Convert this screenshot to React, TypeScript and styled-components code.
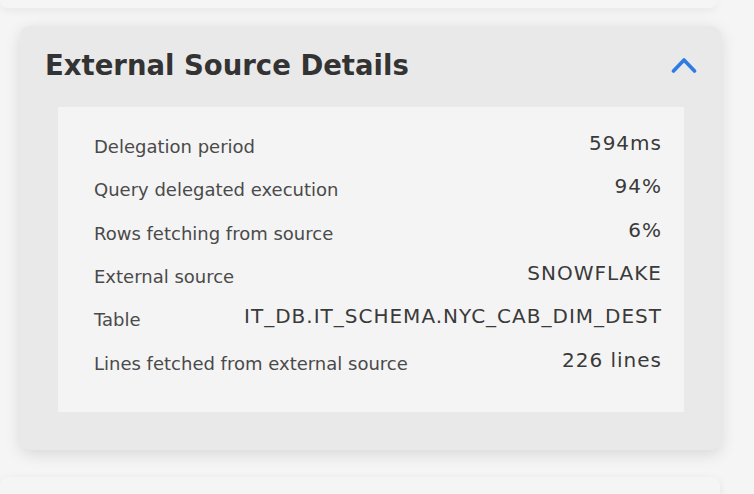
import React, { useState } from 'react'
import styled, { createGlobalStyle } from 'styled-components'

const GlobalStyle = createGlobalStyle`
  html, body {
    margin: 0;
    padding: 0;
    background: #f5f5f5;
    font-family: 'DejaVu Sans', 'Open Sans', sans-serif;
    overflow: hidden;
  }
`

const Page = styled.div`
  display: flex;
  flex-direction: column;
  padding: 0 33px 0 20px;
  height: 494px;
  box-sizing: border-box;
`

const Stub = styled.div<{ $height: number; $top?: boolean }>`
  height: ${(p) => p.$height}px;
  margin-left: -20px;
  margin-right: ${(p) => (p.$top ? 4 : 1)}px;
  flex-shrink: 0;
  background: #f5f5f5;
  border-radius: ${(p) => (p.$top ? '0 0 8px 8px' : '8px 8px 0 0')};
  box-shadow: 0 2px 10px rgba(0, 0, 0, 0.07);
`

const Card = styled.section`
  margin: 18px 0 27px;
  padding: 0 25px 38px;
  background: #e9e9e9;
  border-radius: 10px;
  box-shadow: 0 4px 16px rgba(0, 0, 0, 0.12);
  flex-shrink: 0;
`

const Header = styled.div`
  height: 81px;
  display: flex;
  align-items: center;
  justify-content: space-between;
`

const Title = styled.h2`
  margin: 0 0 2px;
  font-size: 27.5px;
  line-height: 1;
  font-weight: 700;
  color: #333;
`

const Toggle = styled.button`
  border: 0;
  background: none;
  padding: 0;
  width: 26px;
  height: 20px;
  display: flex;
  align-items: center;
  justify-content: center;
  cursor: pointer;
  margin: 0 -1px 3px 0;
`

const Panel = styled.div`
  margin: 0 12px 0 13px;
  padding: 18px 23px 27px 36px;
  background: #f4f4f4;
`

const Row = styled.div`
  height: 43.3px;
  display: flex;
  align-items: center;
  justify-content: space-between;
`

const Label = styled.span`
  font-size: 18px;
  color: #4a4a4a;
`

const Value = styled.span`
  font-size: 20px;
  color: #3a3a3a;
  margin-bottom: 7px;
  letter-spacing: 1px;
  margin-right: -1px;
`

const rows: [string, string][] = [
  ['Delegation period', '594ms'],
  ['Query delegated execution', '94%'],
  ['Rows fetching from source', '6%'],
  ['External source', 'SNOWFLAKE'],
  ['Table', 'IT_DB.IT_SCHEMA.NYC_CAB_DIM_DEST'],
  ['Lines fetched from external source', '226 lines'],
]

function App() {
  const [open, setOpen] = useState(true)

  return (
    <>
      <GlobalStyle />
      <Page>
        <Stub $height={8} $top />
        <Card>
          <Header>
            <Title>External Source Details</Title>
            <Toggle onClick={() => setOpen(!open)}>
              <svg width="26" height="18" viewBox="0 0 26 18">
                <path
                  d={open ? 'M2.5 15 L13 4 L23.5 15' : 'M2.5 4 L13 15 L23.5 4'}
                  fill="none"
                  stroke="#2f7ae5"
                  strokeWidth="3.6"
                  strokeLinecap="round"
                  strokeLinejoin="round"
                />
              </svg>
            </Toggle>
          </Header>
          {open && (
            <Panel>
              {rows.map(([label, value]) => (
                <Row key={label}>
                  <Label>{label}</Label>
                  <Value>{value}</Value>
                </Row>
              ))}
            </Panel>
          )}
        </Card>
        <Stub $height={40} />
      </Page>
    </>
  )
}

export default App
